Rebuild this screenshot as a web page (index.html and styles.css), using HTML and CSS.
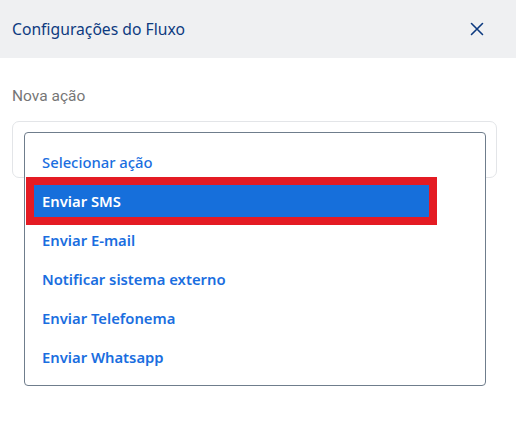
FILE: index.html
```html
<!DOCTYPE html>
<html lang="pt">
<head>
<meta charset="utf-8">
<link rel="stylesheet" href="styles.css">
</head>
<body>
<div class="panel">
  <header class="header">
    <span class="title">Configurações do Fluxo</span>
    <svg class="close" width="14" height="14" viewBox="0 0 14 14"><path d="M1.5 1.5 L12.5 12.5 M12.5 1.5 L1.5 12.5" stroke="#0d3a80" stroke-width="1.6" fill="none" stroke-linecap="round"/></svg>
  </header>
  <main class="content">
    <div class="label">Nova ação</div>
    <div class="field">
      <div class="input"></div>
      <ul class="menu">
        <li class="opt first">Selecionar ação</li>
        <li class="opt sel"><span class="hl">Enviar SMS</span></li>
        <li class="opt">Enviar E-mail</li>
        <li class="opt">Notificar sistema externo</li>
        <li class="opt">Enviar Telefonema</li>
        <li class="opt">Enviar Whatsapp</li>
      </ul>
    </div>
  </main>
</div>
</body>
</html>
```
FILE: styles.css
```css
* { box-sizing: border-box; }
html, body { margin: 0; padding: 0; background: #fff; }
body { font-family: "Noto Sans", "Open Sans", sans-serif; width: 516px; height: 432px; overflow: hidden; }
.header {
  height: 58px;
  background: #eff0f2;
  display: flex;
  align-items: center;
  justify-content: space-between;
  padding: 0 32px 0 12px;
}
.title { font-size: 15.7px; color: #0d3a80; }
.close { display: block; }
.content { padding: 28px 19px 0 12px; }
.label { font-family: Roboto, "Noto Sans", sans-serif; font-size: 15.5px; color: #767676; line-height: 20px; }
.field { position: relative; margin-top: 15px; }
.input {
  height: 57px;
  border: 1px solid #e3e5e8;
  border-radius: 7px;
  background: #fff;
}
.menu {
  position: absolute;
  left: 12px;
  top: 11px;
  width: 462px;
  margin: 0;
  padding: 9px 0 9px 0;
  list-style: none;
  background: #fff;
  border: 1px solid #6f7d8c;
  border-radius: 4px;
}
.opt {
  height: 39px;
  display: flex;
  align-items: center;
  padding-left: 17px;
  font-size: 14.8px;
  font-weight: 600;
  color: #1a6ee0;
  white-space: nowrap;
}
.opt.first { font-weight: 500; }
.opt.sel { padding-left: 9px; }
.hl {
  display: flex;
  align-items: center;
  width: 395px;
  height: 32px;
  padding-left: 8px;
  background: #166fdb;
  color: #fff;
  outline: 8px solid #e41b23;
}
```
